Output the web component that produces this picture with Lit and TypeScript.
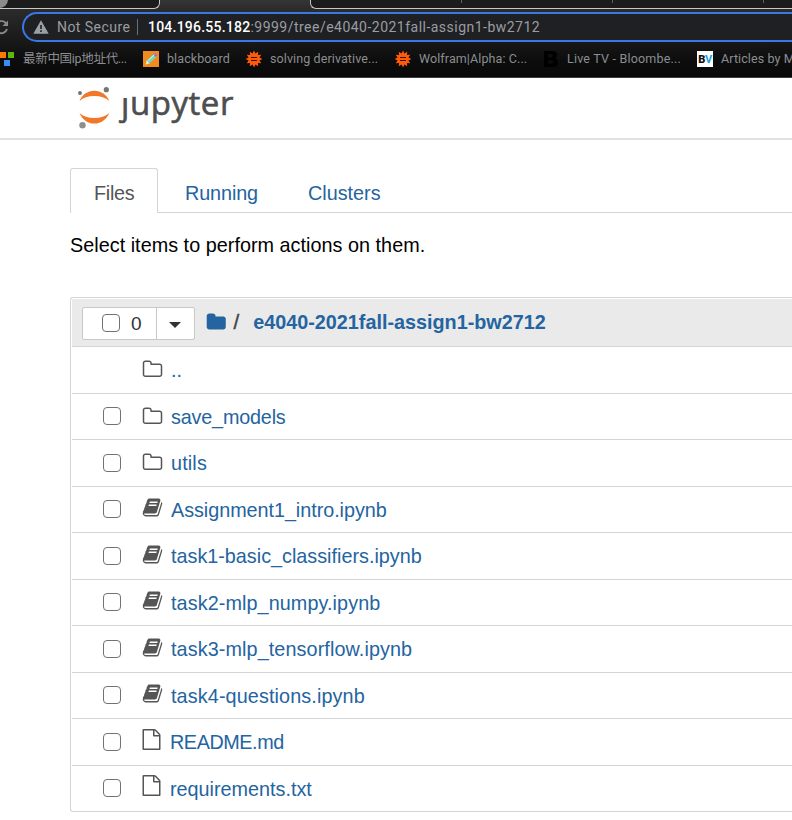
import { LitElement, html, css, svg } from "lit";
import { customElement } from "lit/decorators.js";

const FOLDER = "M1728 608v704q0 92-66 158t-158 66h-1216q-92 0-158-66t-66-158v-960q0-92 66-158t158-66h320q92 0 158 66t66 158v32h672q92 0 158 66t66 158z";
const PATHS: Record<string, string> = {
  folder: "M1600 1312v-704q0-40-28-68t-68-28h-704q-40 0-68-28t-28-68v-64q0-40-28-68t-68-28h-320q-40 0-68 28t-28 68v960q0 40 28 68t68 28h1216q40 0 68-28t28-68zm128-704v704q0 92-66 158t-158 66h-1216q-92 0-158-66t-66-158v-960q0-92 66-158t158-66h320q92 0 158 66t66 158v32h672q92 0 158 66t66 158z",
  book: "M1703 478q40 57 18 129l-275 906q-19 64-76.5 107.5t-122.5 43.5h-923q-77 0-148.5-53.5t-99.5-131.5q-24-67-2-127 0-4 3-27t4-37q1-8-3-21.5t-3-19.5q2-11 8-21t16.5-23.5 16.5-23.5q23-38 45-91.5t30-91.5q3-10 .5-30t-.5-28q3-11 17-28t17-23q21-36 42-92t25-90q1-9-2.5-32t.5-28q4-13 22-30.5t22-22.5q19-26 42.5-84.5t27.5-96.5q1-8-3-25.5t-2-26.5q2-8 9-18t18-23 17-21q8-12 16.5-30.5t15-35 16-36 19.5-32 26.5-23.5 36-11.5 47.5 5.5l-1 3q38-9 51-9h761q74 0 114 56t18 130l-274 906q-36 119-71.5 153.5t-128.5 34.5h-869q-27 0-38 15-11 16-1 43 24 70 144 70h923q29 0 56-15.5t35-41.5l300-987q7-22 5-57 38 15 59 43zm-1064 2q-4 13 2 22.5t20 9.5h608q13 0 25.5-9.5t16.5-22.5l21-64q4-13-2-22.5t-20-9.5h-608q-13 0-25.5 9.5t-16.5 22.5zm-83 256q-4 13 2 22.5t20 9.5h608q13 0 25.5-9.5t16.5-22.5l21-64q4-13-2-22.5t-20-9.5h-608q-13 0-25.5 9.5t-16.5 22.5z",
  file: "M1596 380q28 28 48 76t20 88v1152q0 40-28 68t-68 28h-1344q-40 0-68-28t-28-68v-1600q0-40 28-68t68-28h896q40 0 88 20t76 48zm-444-244v376h376q-10-29-22-41l-313-313q-12-12-41-22zm384 1528v-1024h-416q-40 0-68-28t-28-68v-416h-768v1536h1280z",
};

const ROWS: { name: string; kind: string; up?: boolean; track?: number }[] = [
  { name: "..", kind: "folder", up: true },
  { name: "save_models", kind: "folder", track: -0.18 },
  { name: "utils", kind: "folder", track: 0.15 },
  { name: "Assignment1_intro.ipynb", kind: "book", track: -0.04 },
  { name: "task1-basic_classifiers.ipynb", kind: "book" },
  { name: "task2-mlp_numpy.ipynb", kind: "book", track: 0.09 },
  { name: "task3-mlp_tensorflow.ipynb", kind: "book", track: 0.1 },
  { name: "task4-questions.ipynb", kind: "book", track: 0.12 },
  { name: "README.md", kind: "file", track: -0.42 },
  { name: "requirements.txt", kind: "file" },
];

const burst = (() => {
  const pts: string[] = [];
  for (let i = 0; i < 24; i++) {
    const r = i % 2 ? 5.6 : 8.4;
    const a = (i * Math.PI) / 12 - Math.PI / 2;
    pts.push(`${(8 + r * Math.cos(a)).toFixed(2)},${(8 + r * Math.sin(a)).toFixed(2)}`);
  }
  return pts.join(" ");
})();

const wolfram = svg`<polygon points=${burst} fill="#ff5a0a"/><path d="M5 6.500h6M5 9.500h6" stroke="#30170b" stroke-width="1.100"/>`;

@customElement("browser-chrome")
export class BrowserChrome extends LitElement {
  static styles = css`
    :host { display: block; height: 78px; overflow: hidden; font-family: Roboto, "Noto Sans CJK SC", sans-serif; }
    .bar { box-sizing: border-box; height: 78px; display: flex; flex-direction: column; border-bottom: 1px solid #3c3c3c;
      background: linear-gradient(#353535 0, #2b2b2b 10px, #0c0c0c 62px, #090909 77px); }
    .tabs { height: 9px; display: flex; justify-content: space-between; }
    .tab { box-sizing: border-box; height: 9px; background: #1c1c1c; border-bottom: 1px solid #c8c8c8; }
    .left { width: 160px; border-right: 1px solid #c8c8c8; border-radius: 0 0 6px 0; overflow: hidden; }
    .disc { width: 17px; height: 17px; margin: -9px 0 0 -9px; border-radius: 50%; background: #8c8c8c; }
    .right { width: 482px; border-left: 1px solid #c8c8c8; border-radius: 0 0 0 6px; display: flex; }
    .sep { width: 1px; height: 3px; background: #5f5f5f; margin-left: 150px; }
    .address { height: 30px; margin-top: 3px; display: flex; }
    .reload { width: 10px; height: 30px; margin-right: 12px; flex: none; }
    .pill { box-sizing: border-box; flex: 1; height: 30px; border: 2px solid #3b78e7; border-right: 0; border-radius: 15px 0 0 15px;
      background: #1f2023; display: flex; align-items: center; font-size: 14px; color: #9a9da1; white-space: nowrap; }
    .warn { width: 16px; height: 14px; margin: 0 8px 0 9px; flex: none; }
    .secure { width: 80px; letter-spacing: 0.45px; }
    .rule { width: 1px; height: 16px; background: #6d6e70; margin-right: 10px; }
    .host { color: #fff; font-weight: 500; letter-spacing: 0.23px; }
    .path { letter-spacing: 0.48px; }
    .marks { height: 35px; display: flex; align-items: center; font-size: 12.5px; color: #8b8e91; white-space: nowrap; padding-bottom: 1px; box-sizing: border-box; }
    .mark { display: flex; align-items: center; flex: none; gap: 8px; }
    .mark svg { width: 16px; height: 16px; flex: none; overflow: visible; }
    .w1 { width: 143px; gap: 9px; letter-spacing: -0.3px; } .w1 svg { width: 14px; }
    .w2 { width: 103px; } .w3 { width: 149px; } .w4 { width: 148px; } .w5 { width: 154px; }
    .t { letter-spacing: 0.1px; }
    .w5 .t { letter-spacing: 0.2px; }
  `;

  render() {
    return html`<div class="bar">
      <div class="tabs"><div class="tab left"><div class="disc"></div></div>
        <div class="tab right"><div class="sep"></div><div class="sep"></div><div class="sep"></div></div></div>
      <div class="address">
        <svg class="reload" viewBox="0 0 10 30"><path d="M-1 9.500A6 6 0 0 1 6.500 12.300M-1 20.800A6 6 0 0 0 7 17" fill="none" stroke="#8b8b8b" stroke-width="1.800"/><path d="M8 8.500v5.500H2.500z" fill="#8b8b8b"/></svg>
        <div class="pill">
          <svg class="warn" viewBox="0 0 16 14"><path d="M8 .3L15.700 13.800H.3z" fill="#9aa0a6"/><path d="M8 5v4M8 10.300v1.700" stroke="#1f2023" stroke-width="1.600"/></svg>
          <span class="secure">Not Secure</span><span class="rule"></span>
          <span class="host">104.196.55.182</span><span class="path">:9999/tree/e4040-2021fall-assign1-bw2712</span>
        </div>
      </div>
      <div class="marks">
        <div class="mark w1"><svg viewBox="0 0 14 16"><path d="M0 1h6v6H0z" fill="#ff7a00"/><path d="M8 1h6v6H8z" fill="#5eb80a"/><path d="M4 9h6v6H4z" fill="#3b8cf0"/></svg><span>最新中国ip地址代...</span></div>
        <div class="mark w2"><svg viewBox="0 0 16 16"><path d="M0 0h16v16H0z" fill="#f28b1d"/><path d="M2.500 13.500l1.200-4 7.500-7 2.800 2.800-7.400 7z" fill="#73d9c0"/><path d="M10.200 3.400l1.500-1.400q1 0 2.400 2.600l-1.400 1.500z" fill="#b45cc4"/><path d="M2.500 13.500l1.200-4 3 2.900z" fill="#f6e6bd"/><path d="M4.600 10l7-6.500" stroke="#e3fff3" stroke-width=".8"/></svg><span class="t">blackboard</span></div>
        <div class="mark w3"><svg viewBox="0 0 16 16">${wolfram}</svg><span class="t">solving derivative...</span></div>
        <div class="mark w4"><svg viewBox="0 0 16 16">${wolfram}</svg><span class="t">Wolfram|Alpha: C...</span></div>
        <div class="mark w5"><svg viewBox="0 0 16 16"><path fill-rule="evenodd" d="M1 0h8q5 0 5 4 0 2.700-2.300 3.500Q15 8.400 15 11.600 15 16 9.500 16H1zM5 3.200v3h3q1.800 0 1.800-1.500T8 3.200zM5 9.300v3.500h3.500q2 0 2-1.800T8.500 9.300z" fill="#000"/></svg><span class="t">Live TV - Bloombe...</span></div>
        <div class="mark"><svg viewBox="0 0 16 16"><path d="M0 0h16v16H0z" fill="#fff"/><text x="1.300" y="12" font-size="11" font-weight="900" fill="#111">B</text><text x="8" y="12" font-size="11" font-weight="700" fill="#1aa3dc">V</text></svg><span class="t">Articles by M</span></div>
      </div>
    </div>`;
  }
}

@customElement("app-root")
export class AppRoot extends LitElement {
  static styles = css`
    :host { display: block; width: 100%; height: 820px; overflow: hidden; background: #fff; font: 19.8px/28px "Liberation Sans", Arial, sans-serif; color: #000; }
    .head { box-sizing: border-box; height: 62px; border-bottom: 2px solid #e2e2e2; padding-left: 77px; display: flex; }
    .planet { width: 34px; height: 44px; margin-top: 8px; flex: none; }
    .word { font: 500 33px/44px "Open Sans", "Noto Sans", sans-serif; color: #4e4e4e; margin: 3px 0 0 10px; white-space: nowrap; letter-spacing: 0.55px; -webkit-text-stroke: 0.6px #4e4e4e; }
    .j { display: inline-block; clip-path: inset(17px -8px 0 -8px); }
    .page { margin-left: 70px; padding-top: 28px; }
    .tabs { display: flex; height: 45px; }
    .tab { box-sizing: border-box; padding-top: 11px; border-bottom: 1px solid #d5d5d5; color: #2464a0; letter-spacing: -0.1px; }
    .active { width: 88px; padding: 10px 0 0 23px; border: 1px solid #d5d5d5; border-bottom: 0; border-radius: 3px 3px 0 0; color: #555; letter-spacing: -0.3px; }
    .running { width: 123px; padding-left: 27px; }
    .clusters { flex: 1; padding-left: 27px; letter-spacing: 0; }
    .hint { margin: 19px 0 38px; white-space: nowrap; height: 27px; line-height: 27px; letter-spacing: 0.03px; }
    .list { box-sizing: border-box; border: 1px solid #d5d5d5; border-right: 0; border-radius: 3px 0 0 3px; height: 515px; padding: 1px 0 0 1px; }
    .bar { height: 47px; background: #eaeaea; display: flex; align-items: center; }
    .group { box-sizing: border-box; display: flex; width: 113px; height: 33px; margin: 2px 11px 0 10px; border: 1px solid #c8c8c8; border-radius: 2px; background: #fff; flex: none; }
    .pick { box-sizing: border-box; width: 74px; border-right: 1px solid #c8c8c8; display: flex; align-items: center; padding-left: 19px; gap: 11px; color: #333; font-size: 19px; }
    .pick .box { margin-bottom: 1px; }
    .box { box-sizing: border-box; width: 18px; height: 18px; border: 1.500px solid #727272; border-radius: 4px; background: #fff; flex: none; }
    .caret { width: 0; height: 0; border: 6px solid transparent; border-top-color: #333; border-bottom: 0; margin: 14px 0 0 12px; }
    .home { width: 20.5px; height: 20.5px; fill: #2464a0; }
    .slash { margin: 0 13px 2px 7px; color: #444; font-size: 20.5px; -webkit-text-stroke: 0.4px #444; }
    .crumb { font-weight: bold; color: #2464a0; margin: 0 0 2px 1px; }
    .row { box-sizing: border-box; height: 46.5px; border-top: 1px solid #d5d5d5; display: flex; align-items: center; padding-left: 31px; white-space: nowrap; }
    .row .box { margin-right: 21px; }
    .up .box { visibility: hidden; }
    .icon { width: 21px; height: 21px; fill: #555; flex: none; margin-right: 8px; }
    .folder { margin-bottom: 0; }
    .book { margin-bottom: 3px; }
    .file { margin: 0 8px 5px -1px; }
    .name { color: #2464a0; margin-top: 1px; }
  `;

  render() {
    return html`<browser-chrome></browser-chrome>
      <header class="head">
        <svg class="planet" viewBox="0 0 34 44"><g fill="#f37726"><path d="M2.500 15C5 9 10.500 4.800 17.300 4.800S29.800 9 32.300 15C28.500 11.600 23.500 9.900 17.300 9.900S6.300 11.600 2.500 15z"/><path d="M2.500 27C6.300 30.300 11.200 32.100 17.300 32.100s11.200-1.800 15-5.100C29.800 33.200 24.200 37.600 17.300 37.600S5 33.200 2.500 27z"/></g><circle cx="3" cy="7" r="1.900" fill="#6e6e6e"/><circle cx="29.300" cy="3.700" r="2.600" fill="#767677"/><circle cx="5.500" cy="39.300" r="3.200" fill="#8f8f8f"/></svg>
        <div class="word"><span class="j">j</span>upyter</div>
      </header>
      <main class="page">
        <nav class="tabs"><div class="tab active">Files</div><div class="tab running">Running</div><div class="tab clusters">Clusters</div></nav>
        <div class="hint">Select items to perform actions on them.</div>
        <section class="list">
          <div class="bar">
            <div class="group"><div class="pick"><span class="box"></span><span>0</span></div><div class="caret"></div></div>
            <svg class="home" viewBox="0 0 1792 1792"><path d=${FOLDER} /></svg><span class="slash">/</span><span class="crumb">e4040-2021fall-assign1-bw2712</span>
          </div>
          ${ROWS.map((r) => html`<div class="row ${r.up ? "up" : ""}"><span class="box"></span>
            <svg class="icon ${r.kind}" viewBox="0 0 1792 1792"><path d=${PATHS[r.kind]} /></svg><span class="name" style="letter-spacing:${r.track ?? 0}px">${r.name}</span></div>`)}
        </section>
      </main>`;
  }
}
